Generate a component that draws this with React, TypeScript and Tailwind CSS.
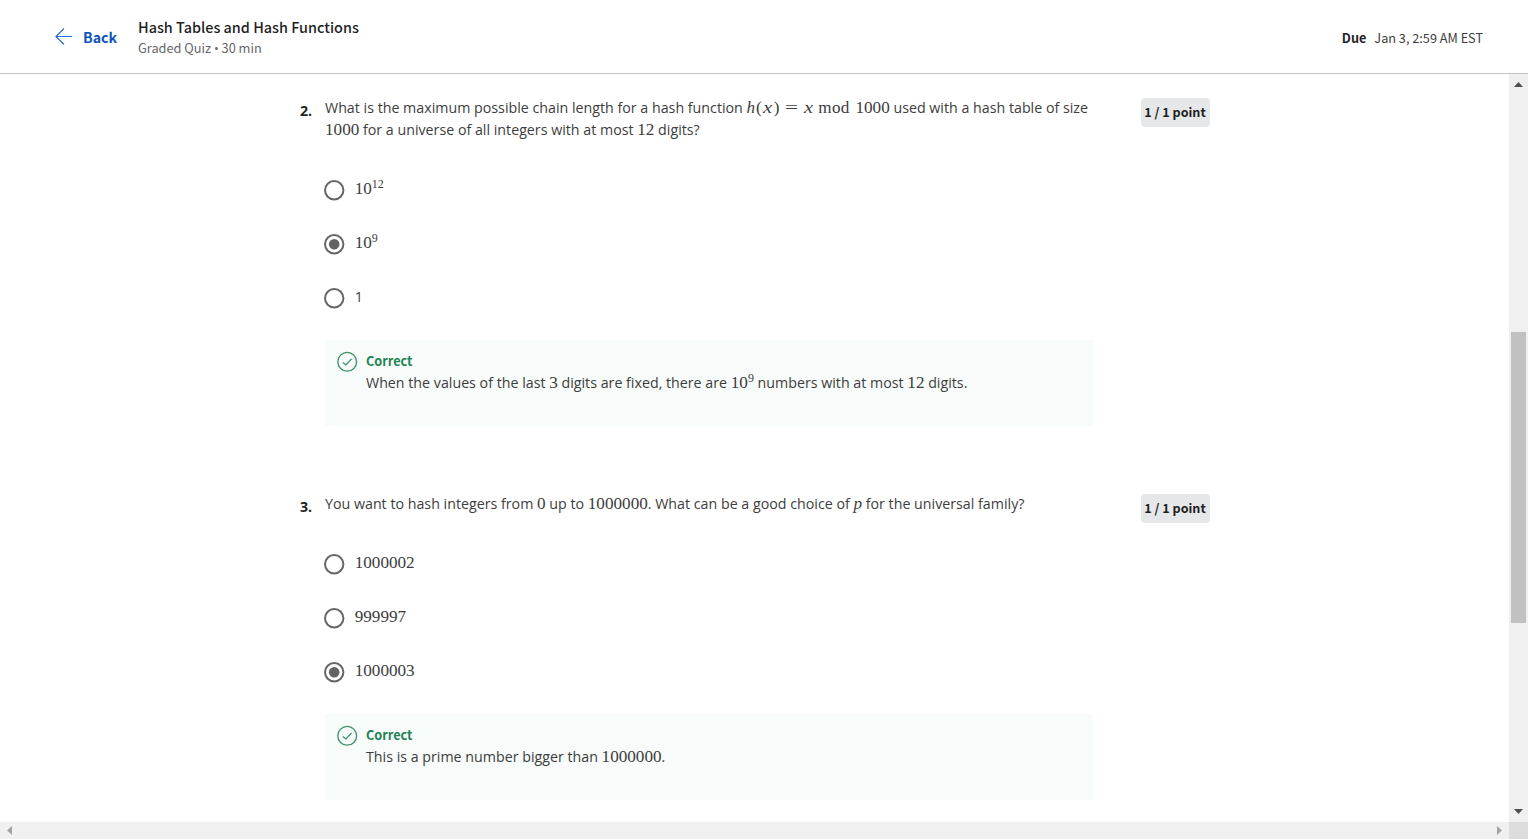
import type { ReactNode } from "react";

const ui = "font-['Noto_Sans_CJK_SC','Open_Sans',sans-serif]";

function Num({ children }: { children: ReactNode }) {
  return (
    <span className="font-['Liberation_Serif',serif] text-[17.15px] leading-none">{children}</span>
  );
}

function Sup({ children }: { children: ReactNode }) {
  return (
    <span className="relative -top-[6px] font-['Liberation_Serif',serif] text-[12px] leading-none">
      {children}
    </span>
  );
}

function Radio({ checked }: { checked?: boolean }) {
  return (
    <svg className="size-[21px] shrink-0" viewBox="0 0 21 21">
      <circle cx="10.2" cy="10.2" r="9.2" fill="none" stroke="#666" strokeWidth="2" />
      {checked && <circle cx="10.2" cy="10.2" r="5.3" fill="#636363" />}
    </svg>
  );
}

function Option({ checked, children }: { checked?: boolean; children: ReactNode }) {
  return (
    <label className="-ml-px flex h-[54px] items-center">
      <Radio checked={checked} />
      <span className="-mt-[3px] ml-[9.7px] leading-[22px]">{children}</span>
    </label>
  );
}

function Feedback({ children }: { children: ReactNode }) {
  return (
    <div className="flex h-[86px] w-[768px] bg-[#f7fbf9] pt-[11px] pl-[12px]">
      <svg className="size-[21px] shrink-0" viewBox="0 0 21 21" fill="none" stroke="#3c9166">
        <circle cx="10.2" cy="10.8" r="9.4" strokeWidth="1.3" />
        <path d="M5.9 11.4 L8.9 13.9 L14.6 7.9" strokeWidth="1.3" />
      </svg>
      <div className="ml-[8px]">
        <div className={`${ui} -mt-px text-[12.7px] leading-[21px] font-bold text-[#1f8354]`}>
          Correct
        </div>
        <div className="mt-px leading-[22px] whitespace-nowrap">{children}</div>
      </div>
    </div>
  );
}

function Question({
  number,
  prompt,
  children,
}: {
  number: string;
  prompt: ReactNode;
  children: ReactNode;
}) {
  return (
    <section className="flex items-start">
      <div className="w-[25px] shrink-0 pt-[3px] text-[14.2px] leading-[22px] font-bold text-[#1f1f1f]">
        {number}
      </div>
      <div className="w-[768px] shrink-0">
        <div className="leading-[22px] whitespace-nowrap">{prompt}</div>
        {children}
      </div>
      <div
        className={`${ui} mt-[0.5px] ml-[47.5px] flex h-[29px] w-[69px] items-center justify-center rounded-[4px] bg-[#e5e7e8] text-[12.6px] font-bold whitespace-nowrap text-[#1f1f1f]`}
      >
        1 / 1 point
      </div>
    </section>
  );
}

export default function App() {
  return (
    <div className="flex h-[839px] w-[1528px] flex-col overflow-hidden bg-white font-['Open_Sans',sans-serif] text-[14.24px] text-[#3d3d3d]">
      <header
        className={`${ui} flex h-[74px] shrink-0 items-center border-b border-[#c4c4c4] pr-[45px] pl-[55px]`}
      >
        <svg className="h-[17px] w-[17px]" viewBox="0 0 17 17" fill="none" stroke="#2a6fc9">
          <path d="M17 8.5H1M9 .5L1 8.5l8 8" strokeWidth="1.2" />
        </svg>
        <span className="ml-[11px] w-[55px] text-[14.2px] leading-[20px] font-bold text-[#0f56b8]">
          Back
        </span>
        <div className="pt-[2px] whitespace-nowrap">
          <div className="text-[14.4px] leading-[21px] font-medium text-[#1f1f1f]">
            Hash Tables and Hash Functions
          </div>
          <div className="text-[12.75px] leading-[21px] text-[#666]">
            Graded Quiz <span className="font-['Open_Sans',sans-serif]">•</span> 30 min
          </div>
        </div>
        <div className="ml-auto flex gap-[8px] pt-[2px] text-[12.7px] whitespace-nowrap">
          <span className="font-bold text-[#1f1f1f]">Due</span>
          <span>Jan 3, 2:59 AM EST</span>
        </div>
      </header>

      <div className="flex h-[748px] shrink-0">
        <main className="flex w-[1509px] flex-col overflow-hidden pt-[23px] pl-[300px]">
          <Question
            number="2."
            prompt={
              <>
                <div>
                  What is the maximum possible chain length for a hash function{" "}
                  <Num>
                    <i className="tracking-[0.9px]">h</i>
                    <span className="tracking-[0.9px]">(</span>
                    <i className="mr-[2px] inline-block w-[9px] origin-left scale-x-[1.2]">x</i>)
                    <span className="mx-[6px] inline-block w-[13px] scale-x-[1.35] text-center">
                      =
                    </span>
                    <i className="mr-[6px] inline-block w-[8px] origin-left scale-x-[1.2]">x</i>
                    <span className="mr-[6px] tracking-[0.2px]">mod</span>
                    1000
                  </Num>{" "}
                  used with a hash table of size
                </div>
                <div>
                  <Num>1000</Num> for a universe of all integers with at most <Num>12</Num> digits?
                </div>
              </>
            }
          >
            <div className="mt-[22px] mb-[15px]">
              <Option>
                <Num>10</Num>
                <Sup>12</Sup>
              </Option>
              <Option checked>
                <Num>10</Num>
                <Sup>9</Sup>
              </Option>
              <Option>1</Option>
            </div>
            <Feedback>
              When the values of the last <Num>3</Num> digits are fixed, there are <Num>10</Num>
              <Sup>9</Sup> numbers with at most <Num>12</Num> digits.
            </Feedback>
          </Question>
          <div className="h-[67px] shrink-0" />
          <Question
            number="3."
            prompt={
              <>
                You want to hash integers from <Num>0</Num> up to <Num>1000000</Num>. What can be a
                good choice of{" "}
                <Num>
                  <i>p</i>
                </Num>{" "}
                for the universal family?
              </>
            }
          >
            <div className="mt-[22px] mb-[15px]">
              <Option>
                <Num>1000002</Num>
              </Option>
              <Option>
                <Num>999997</Num>
              </Option>
              <Option checked>
                <Num>1000003</Num>
              </Option>
            </div>
            <Feedback>
              This is a prime number bigger than <Num>1000000</Num>.
            </Feedback>
          </Question>
        </main>
        <div className="flex w-[19px] flex-col items-center bg-[#f0f0f0] pt-[8px] pb-[8px]">
          <svg className="h-[5px] w-[9px]" viewBox="0 0 9 5">
            <path d="M0 5L4.5 0L9 5Z" fill="#505050" />
          </svg>
          <div className="mt-[245px] h-[291px] w-[15px] bg-[#c1c1c1]" />
          <svg className="mt-auto h-[5px] w-[9px]" viewBox="0 0 9 5">
            <path d="M0 0L4.5 5L9 0Z" fill="#505050" />
          </svg>
        </div>
      </div>
      <div className="flex h-[17px] shrink-0">
        <div className="flex w-[1509px] items-center justify-between bg-[#f0f0f0] px-[7px]">
          <svg className="h-[9px] w-[5px]" viewBox="0 0 5 9">
            <path d="M5 0L0 4.5L5 9Z" fill="#a3a3a3" />
          </svg>
          <svg className="h-[9px] w-[5px]" viewBox="0 0 5 9">
            <path d="M0 0L5 4.5L0 9Z" fill="#a3a3a3" />
          </svg>
        </div>
        <div className="w-[19px] bg-[#dcdcdc]" />
      </div>
    </div>
  );
}
